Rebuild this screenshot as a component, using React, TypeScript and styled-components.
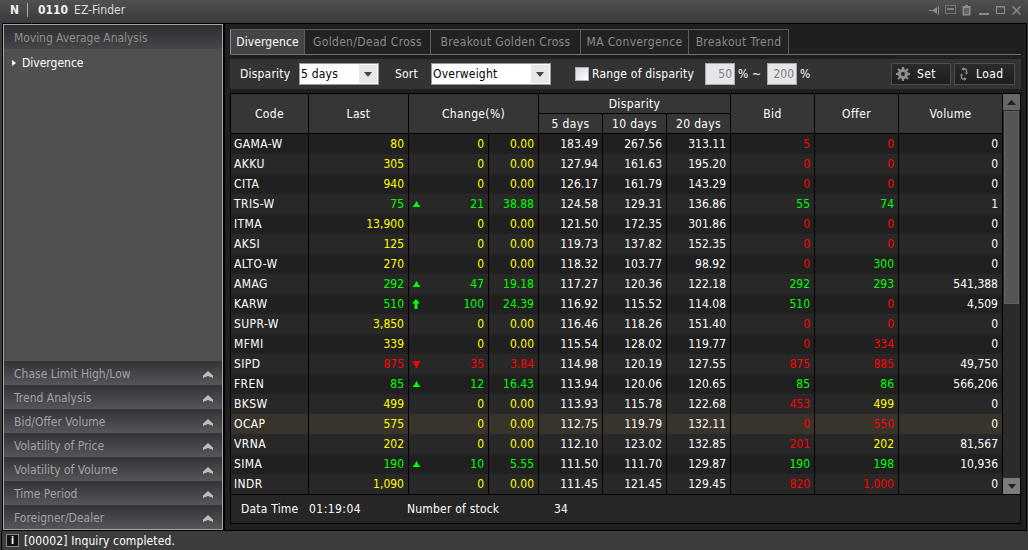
import React from "react";
import styled, { createGlobalStyle } from "styled-components";

const Global = createGlobalStyle`
  html, body { margin: 0; padding: 0; background: #3a3a3a; overflow: hidden; }
  body { font-family: "DejaVu Sans Condensed", "DejaVu Sans", sans-serif; font-size: 12px; letter-spacing: .2px; }
  * { box-sizing: border-box; }
`;

const Page = styled.div`
  width: 1028px; height: 550px; display: flex; flex-direction: column; background: #3c3c3c; color: #fff;
`;
const TitleBar = styled.div`
  height: 23px; flex: none; display: flex; align-items: center; padding: 0 7px 3px 10px;
  background: linear-gradient(#505050, #3a3a3a); color: #eee; white-space: nowrap;
`;
const TitleBold = styled.b`font-weight: 700; color: #f0f0f0; letter-spacing: 0;`;
const TitleSep = styled.span`width: 1px; height: 14px; background: #aaa; margin: 0 10px 0 8px;`;
const TitleName = styled.span`margin-left: 6px; color: #ddd; letter-spacing: 0;`;
const WinIcons = styled.div`margin-left: auto; display: flex; align-items: center; color: #8c8c8c;`;
const WinIcon = styled.svg<{ $ml?: number; $mt?: number }>`
  display: block; margin-left: ${p => p.$ml ?? 0}px; margin-top: ${p => p.$mt ?? 0}px;
`;

const Main = styled.div`
  height: 508px; flex: none; display: flex; background: #000; padding: 1px 1px 1px 1px; margin-left: 2px; width: 1025px;
`;
const Side = styled.div`
  width: 220px; flex: none; display: flex; flex-direction: column; background: #505050; border: 1px solid #a4a4a4; margin-right: 2px;
`;
const SideHead = styled.div`
  height: 25px; flex: none; display: flex; align-items: center; padding: 1px 0 0 10px; color: #8f8f80; letter-spacing: -.05px;
  background: linear-gradient(#2d2d33 0, #45454a 24px, #505050 24px);
`;
const SideBody = styled.div`flex: 1; padding: 6px 8px; color: #fff; display: flex; flex-direction: column;`;
const SideItem = styled.div`display: flex; align-items: center; gap: 6px; height: 14px; letter-spacing: 0;`;
const Acc = styled.div`
  height: 24px; flex: none; display: flex; align-items: center; justify-content: space-between; padding: 2px 9px 0 10px; color: #a2a2a2; letter-spacing: 0;
  background: linear-gradient(#323237, #55555a);
`;

const Right = styled.div`
  flex: 1; min-width: 0; background: #1f1f1f; padding: 5px 5px 6px 5px; display: flex; flex-direction: column;
`;
const Tabs = styled.div`display: flex; height: 26px; flex: none; border-bottom: 1px solid #6a6e7c;`;
const Tab = styled.div<{ $w: number; $on?: boolean }>`
  width: ${p => p.$w}px; display: flex; align-items: center; justify-content: center; white-space: nowrap;
  letter-spacing: ${p => (p.$on ? ".1px" : ".33px")};
  color: ${p => (p.$on ? "#fff" : "#8a8a8a")}; background: ${p => (p.$on ? "#454545" : "#222")};
  border: 1px solid #5e5e5e; border-bottom: none; border-left-color: ${p => (p.$on ? "#8890a0" : "#5e5e5e")}; margin-right: -1px;
`;
const Toolbar = styled.div`
  height: 30px; flex: none; margin-top: 4px; background: #333; display: flex; align-items: center; padding-left: 10px; padding-right: 6px; color: #fff;
`;
const Label = styled.span<{ $ml?: number; $w?: number }>`
  margin-left: ${p => p.$ml ?? 0}px; width: ${p => (p.$w ? p.$w + "px" : "auto")}; flex: none; white-space: nowrap;
`;
const Select = styled.div<{ $w: number }>`
  width: ${p => p.$w}px; height: 22px; flex: none; background: #fff; border: 1px solid #999; color: #000;
  display: flex; align-items: center; padding-left: 1px; justify-content: space-between;
`;
const Caret = styled.span`
  width: 18px; height: 18px; margin-right: 1px; background: #e8e8e8; display: flex; align-items: center; justify-content: center;
`;
const Check = styled.span`
  width: 14px; height: 14px; flex: none; margin-left: 24px; margin-right: 3px; border: 1px solid #aaa; background: linear-gradient(135deg, #d4d6e2, #fff);
`;
const NumBox = styled.span`
  width: 30px; height: 22px; flex: none; background: #e4e6ea; border: 1px solid #aaa; color: #808080; letter-spacing: 0;
  display: flex; align-items: center; justify-content: flex-end; padding-right: 2px;
`;
const Btn = styled.div<{ $w: number; $ml: string }>`
  width: ${p => p.$w}px; height: 22px; flex: none; margin-left: ${p => p.$ml}; border: 1px solid #4c4c4c; background: linear-gradient(#2b2b2b, #1e1e1e);
  display: flex; align-items: center; padding-left: 4px; color: #fff;
`;
const BtnText = styled.span<{ $ml: number }>`margin-left: ${p => p.$ml}px; letter-spacing: .4px;`;

const TableWrap = styled.div`
  margin-top: 4px; height: 402px; flex: none; display: flex; background: #000; padding: 1px 0 1px 1px;
`;
const Grid = styled.div`width: 772px; flex: none;`;
const cols = "78px 100px 80px 50px 64px 64px 64px 84px 84px 104px";
const Head = styled.div`
  display: grid; grid-template-columns: ${cols}; grid-template-rows: 20px 20px; height: 40px;
`;
const HCell = styled.div<{ $c: string; $r: string }>`
  grid-column: ${p => p.$c}; grid-row: ${p => p.$r}; display: flex; align-items: center; justify-content: center; padding-top: 1px; letter-spacing: .35px;
  background: #363636; color: #fff; border-right: 1px solid #000; border-bottom: 1px solid #000;
`;
const Row = styled.div<{ $i: number; $hl?: boolean }>`
  display: grid; grid-template-columns: ${cols}; height: 20px; letter-spacing: 0;
  background: ${p => (p.$hl ? "#38332b" : p.$i % 2 ? "#282828" : "#202020")};
`;
const Cell = styled.div<{ $col?: string; $left?: boolean }>`
  display: flex; align-items: center; justify-content: ${p => (p.$left ? "flex-start" : "flex-end")};
  padding: ${p => (p.$left ? "0 0 0 3px" : "0 4px 0 0")}; border-right: 1px solid #000; color: ${p => p.$col ?? "#fff"};
  letter-spacing: ${p => (p.$left ? ".4px" : "0")};
`;
const ChangeCell = styled(Cell)`justify-content: space-between; padding-left: 3px;`;
const ArrowSlot = styled.span`width: 8px; height: 11px; display: flex; align-items: center; justify-content: center;`;

const Scroll = styled.div`
  flex: 1; display: flex; flex-direction: column; background: #2b2b2b; border-right: 1px solid #000;
`;
const ScrollBtn = styled.div<{ $bg: string }>`
  height: 16px; flex: none; background: ${p => p.$bg}; display: flex; align-items: center; justify-content: center;
`;
const Thumb = styled.div`height: 193px; flex: none; margin: 1px 1px 0; background: #555; border: 1px solid #5f5f5f;`;
const Track = styled.div`flex: 1;`;

const Footer = styled.div`
  height: 29px; flex: none; background: #262626; display: flex; align-items: center; padding-left: 10px; color: #fff;
  border: 1px solid #000; border-top: none; margin-right: 0;
`;
const FootVal = styled.span<{ $w?: number; $ls?: number }>`
  width: ${p => (p.$w ? p.$w + "px" : "auto")}; flex: none; letter-spacing: ${p => p.$ls ?? 0.2}px;
`;

const Status = styled.div`
  flex: 1; display: flex; align-items: center; padding-left: 4px; gap: 5px; background: #3c3c3c; color: #fff; border-left: 1px solid #000; margin-left: 1px; letter-spacing: .12px;
`;
const InfoIcon = styled.span`
  width: 13px; height: 13px; background: #111; border: 1px solid #888; display: flex; align-items: center; justify-content: center;
  color: #fff; font-weight: 700; font-size: 10px; line-height: 1;
`;

const Y = "#ffff00", G = "#00ff00", R = "#ff0000";
type D = [string, string, string, "u" | "d" | "U" | "", string, string, string, string, string, string, string, string, string, string, string];
const d: D[] = [
  ["GAMA-W", "80", Y, "", "0", "0.00", "183.49", "267.56", "313.11", "5", R, "0", R, "0", ""],
  ["AKKU", "305", Y, "", "0", "0.00", "127.94", "161.63", "195.20", "0", R, "0", R, "0", ""],
  ["CITA", "940", Y, "", "0", "0.00", "126.17", "161.79", "143.29", "0", R, "0", R, "0", ""],
  ["TRIS-W", "75", G, "u", "21", "38.88", "124.58", "129.31", "136.86", "55", G, "74", G, "1", ""],
  ["ITMA", "13,900", Y, "", "0", "0.00", "121.50", "172.35", "301.86", "0", R, "0", R, "0", ""],
  ["AKSI", "125", Y, "", "0", "0.00", "119.73", "137.82", "152.35", "0", R, "0", R, "0", ""],
  ["ALTO-W", "270", Y, "", "0", "0.00", "118.32", "103.77", "98.92", "0", R, "300", G, "0", ""],
  ["AMAG", "292", G, "u", "47", "19.18", "117.27", "120.36", "122.18", "292", G, "293", G, "541,388", ""],
  ["KARW", "510", G, "U", "100", "24.39", "116.92", "115.52", "114.08", "510", G, "0", R, "4,509", ""],
  ["SUPR-W", "3,850", Y, "", "0", "0.00", "116.46", "118.26", "151.40", "0", R, "0", R, "0", ""],
  ["MFMI", "339", Y, "", "0", "0.00", "115.54", "128.02", "119.77", "0", R, "334", R, "0", ""],
  ["SIPD", "875", R, "d", "35", "3.84", "114.98", "120.19", "127.55", "875", R, "885", R, "49,750", ""],
  ["FREN", "85", G, "u", "12", "16.43", "113.94", "120.06", "120.65", "85", G, "86", G, "566,206", ""],
  ["BKSW", "499", Y, "", "0", "0.00", "113.93", "115.78", "122.68", "453", R, "499", Y, "0", ""],
  ["OCAP", "575", Y, "", "0", "0.00", "112.75", "119.79", "132.11", "0", R, "550", R, "0", "hl"],
  ["VRNA", "202", Y, "", "0", "0.00", "112.10", "123.02", "132.85", "201", R, "202", Y, "81,567", ""],
  ["SIMA", "190", G, "u", "10", "5.55", "111.50", "111.70", "129.87", "190", G, "198", G, "10,936", ""],
  ["INDR", "1,090", Y, "", "0", "0.00", "111.45", "121.45", "129.45", "820", R, "1,000", R, "0", ""],
];

const Arrow = ({ k }: { k: string }) => {
  if (k === "u") return <svg width="7" height="6" viewBox="0 0 7 6"><path d="M3.5 0L6 4.5H7V6H0V4.5H1Z" fill={G} /></svg>;
  if (k === "d") return <svg width="7" height="7" viewBox="0 0 7 7"><path d="M0 0H7V1.5L4.5 5V7H2.5V5L0 1.5Z" fill={R} /></svg>;
  if (k === "U") return <svg width="8" height="10" viewBox="0 0 8 10"><path d="M4 0L8 4.5H5.5V10H2.5V4.5H0Z" fill={G} /></svg>;
  return null;
};
const Up = ({ c }: { c: string }) => <svg width="9" height="5" viewBox="0 0 9 5"><path d="M4.5 0L9 5H0Z" fill={c} /></svg>;
const Down = ({ c }: { c: string }) => <svg width="8" height="5" viewBox="0 0 8 5"><path d="M0 0H8L4 5Z" fill={c} /></svg>;
const Chevron = () => <svg width="10" height="7" viewBox="0 0 10 7"><path d="M5 0L10 4.5V7L5 5L0 7V4.5Z" fill="#bcbcbc" /></svg>;

const WinSet = () => (
  <WinIcons>
    <WinIcon width="10" height="9" viewBox="0 0 10 9">
      <path d="M0 4.5H4" stroke="currentColor" />
      <path d="M3 4.5L8 1V8Z" fill="currentColor" />
      <path d="M9.5 0V9" stroke="currentColor" />
    </WinIcon>
    <WinIcon width="11" height="10" viewBox="0 0 11 10" fill="none" $ml={6}>
      <rect x=".5" y=".5" width="10" height="8" stroke="#6f757d" fill="#444" />
      <path d="M2 4H9" stroke="#7a8088" strokeWidth="2" />
    </WinIcon>
    <WinIcon width="9" height="11" viewBox="0 0 9 11" fill="none" $ml={6}>
      <path d="M3 0H6V1H8.5V10.5H.5V1H3Z" fill="currentColor" />
      <path d="M2 4H7M2 6H7M2 8H7" stroke="#3e3e3e" />
    </WinIcon>
    <WinIcon width="10" height="2" viewBox="0 0 10 2" $ml={8} $mt={7}>
      <rect width="10" height="2" fill="currentColor" />
    </WinIcon>
    <WinIcon width="9" height="8" viewBox="0 0 9 8" fill="none" $ml={7}>
      <rect x=".5" y=".5" width="8" height="7" stroke="currentColor" />
      <path d="M0 1H9" stroke="currentColor" />
    </WinIcon>
    <WinIcon width="9" height="9" viewBox="0 0 9 9" fill="none" $ml={7}>
      <path d="M.5 .5L8.5 8.5M8.5 .5L.5 8.5" stroke="currentColor" strokeWidth="1.5" />
    </WinIcon>
  </WinIcons>
);

const Gear = () => (
  <svg width="14" height="14" viewBox="0 0 14 14" fill="#8f8f8f">
    <path fillRule="evenodd" d="M6 0H8L8.4 2.3L9.7 2.8L11.5 1.3L12.7 2.5L11.2 4.3L11.7 5.6L14 6V8L11.7 8.4L11.2 9.7L12.7 11.5L11.5 12.7L9.7 11.2L8.4 11.7L8 14H6L5.6 11.7L4.3 11.2L2.5 12.7L1.3 11.5L2.8 9.7L2.3 8.4L0 8V6L2.3 5.6L2.8 4.3L1.3 2.5L2.5 1.3L4.3 2.8L5.6 2.3ZM7 5A2 2 0 1 0 7 9A2 2 0 1 0 7 5Z" />
  </svg>
);
const Reload = () => (
  <svg width="10" height="14" viewBox="0 0 10 14" fill="none" stroke="#8a8a8a" strokeWidth="1.4">
    <path d="M7.5 5.5V3.5Q7.5 2 5.5 2H3" />
    <path d="M2.5 8.5V10.5Q2.5 12 4.5 12H7" />
    <path d="M5 0L2.5 2L5 4Z" fill="#8a8a8a" stroke="none" />
    <path d="M5 10L7.5 12L5 14Z" fill="#8a8a8a" stroke="none" />
    <path d="M5.5 5.5H9.5L7.5 7.5Z M.5 8.5H4.5L2.5 6.5Z" fill="#8a8a8a" stroke="none" />
  </svg>
);

const acc = ["Chase Limit High/Low", "Trend Analysis", "Bid/Offer Volume", "Volatility of Price", "Volatility of Volume", "Time Period", "Foreigner/Dealer"];

export default function App() {
  return (
    <Page>
      <Global />
      <TitleBar>
        <TitleBold>N</TitleBold>
        <TitleSep />
        <TitleBold>0110</TitleBold>
        <TitleName>EZ-Finder</TitleName>
        <WinSet />
      </TitleBar>
      <Main>
        <Side>
          <SideHead>Moving Average Analysis</SideHead>
          <SideBody>
            <SideItem>
              <svg width="4" height="6" viewBox="0 0 4 6"><path d="M0 0L4 3L0 6Z" fill="#fff" /></svg>
              Divergence
            </SideItem>
          </SideBody>
          {acc.map(a => (
            <Acc key={a}>{a}<Chevron /></Acc>
          ))}
        </Side>
        <Right>
          <Tabs>
            <Tab $w={75} $on>Divergence</Tab>
            <Tab $w={127}>Golden/Dead Cross</Tab>
            <Tab $w={151}>Breakout Golden Cross</Tab>
            <Tab $w={109}>MA Convergence</Tab>
            <Tab $w={101}>Breakout Trend</Tab>
          </Tabs>
          <Toolbar>
            <Label $w={59}>Disparity</Label>
            <Select $w={80}>5 days<Caret><Down c="#444" /></Caret></Select>
            <Label $ml={16} $w={36}>Sort</Label>
            <Select $w={120}>Overweight<Caret><Down c="#444" /></Caret></Select>
            <Check />
            <Label $w={113}>Range of disparity</Label>
            <NumBox>50</NumBox>
            <Label $ml={3} $w={29}>% ~</Label>
            <NumBox>200</NumBox>
            <Label $ml={3}>%</Label>
            <Btn $w={60} $ml="auto"><Gear /><BtnText $ml={7}>Set</BtnText></Btn>
            <Btn $w={61} $ml="3px"><Reload /><BtnText $ml={7}>Load</BtnText></Btn>
          </Toolbar>
          <TableWrap>
            <Grid>
              <Head>
                <HCell $c="1" $r="1 / 3">Code</HCell>
                <HCell $c="2" $r="1 / 3">Last</HCell>
                <HCell $c="3 / 5" $r="1 / 3">Change(%)</HCell>
                <HCell $c="5 / 8" $r="1">Disparity</HCell>
                <HCell $c="5" $r="2">5 days</HCell>
                <HCell $c="6" $r="2">10 days</HCell>
                <HCell $c="7" $r="2">20 days</HCell>
                <HCell $c="8" $r="1 / 3">Bid</HCell>
                <HCell $c="9" $r="1 / 3">Offer</HCell>
                <HCell $c="10" $r="1 / 3">Volume</HCell>
              </Head>
              {d.map((r, i) => (
                <Row key={r[0]} $i={i} $hl={r[14] === "hl"}>
                  <Cell $left>{r[0]}</Cell>
                  <Cell $col={r[2]}>{r[1]}</Cell>
                  <ChangeCell $col={r[2]}><ArrowSlot><Arrow k={r[3]} /></ArrowSlot>{r[4]}</ChangeCell>
                  <Cell $col={r[2]}>{r[5]}</Cell>
                  <Cell>{r[6]}</Cell>
                  <Cell>{r[7]}</Cell>
                  <Cell>{r[8]}</Cell>
                  <Cell $col={r[10]}>{r[9]}</Cell>
                  <Cell $col={r[12]}>{r[11]}</Cell>
                  <Cell>{r[13]}</Cell>
                </Row>
              ))}
            </Grid>
            <Scroll>
              <ScrollBtn $bg="#666"><Up c="#1e1e1e" /></ScrollBtn>
              <Thumb />
              <Track />
              <ScrollBtn $bg="#7c7c7c"><Down c="#222" /></ScrollBtn>
            </Scroll>
          </TableWrap>
          <Footer>
            <FootVal $w={68}>Data Time</FootVal>
            <FootVal $w={98} $ls={0.45}>01:19:04</FootVal>
            <FootVal $w={147}>Number of stock</FootVal>
            <FootVal>34</FootVal>
          </Footer>
        </Right>
      </Main>
      <Status>
        <InfoIcon>i</InfoIcon>
        [00002] Inquiry completed.
      </Status>
    </Page>
  );
}
